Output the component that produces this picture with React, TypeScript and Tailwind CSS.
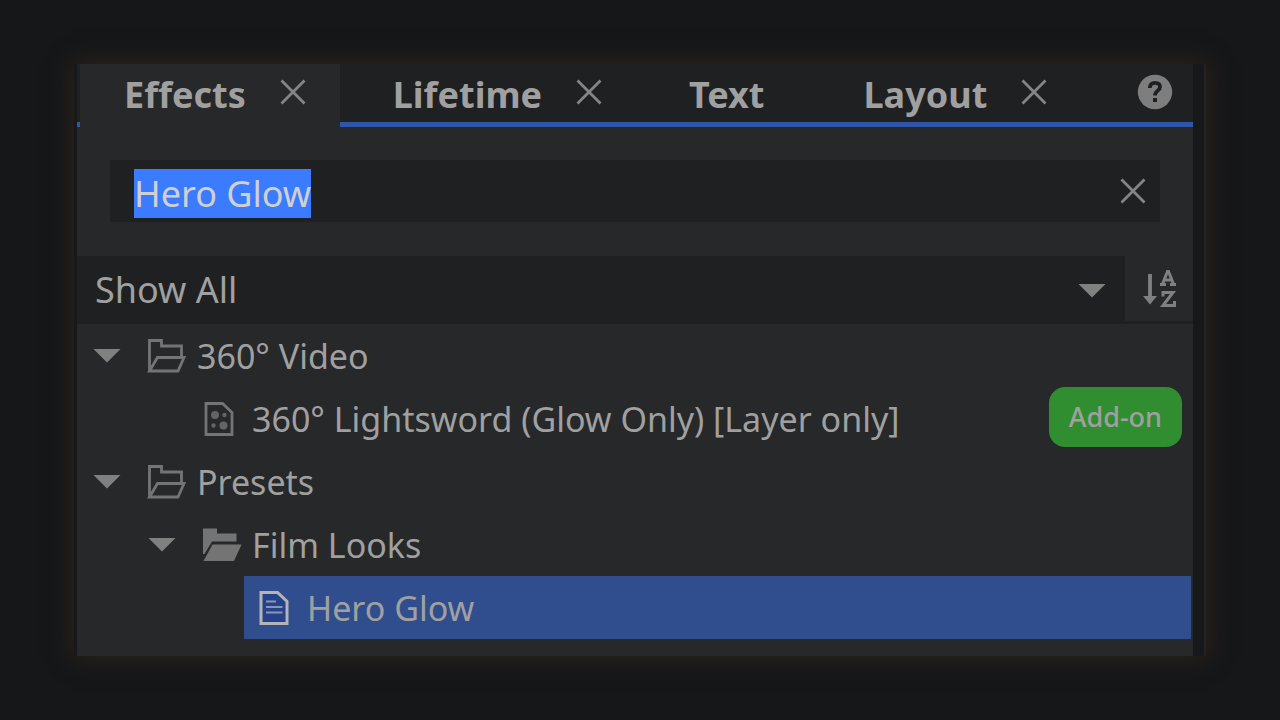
import { useEffect, useRef, type ReactNode } from "react";
import { clsx } from "clsx";

const TABS = [
  { label: "Effects", closable: true, active: true },
  { label: "Lifetime", closable: true, active: false },
  { label: "Text", closable: false, active: false },
  { label: "Layout", closable: true, active: false },
];

function CrossIcon() {
  return (
    <svg className="size-[26px]" viewBox="0 0 26 26" fill="none" stroke="currentColor" strokeWidth="2.8" aria-hidden="true">
      <path d="M1.5 1.5 24.5 24.5M24.5 1.5 1.5 24.5" />
    </svg>
  );
}

function Triangle() {
  return (
    <svg className="h-[15px] w-[28px]" viewBox="0 0 28 15" fill="currentColor" aria-hidden="true">
      <path d="M0.5 1H27.5L14 14.5Z" />
    </svg>
  );
}

function HelpIcon() {
  return (
    <svg className="size-9" viewBox="0 0 36 36" aria-hidden="true">
      <circle cx="18" cy="18" r="17.2" fill="#7e7e7e" />
      <path d="M12.8 14C13 10.4 15 8.8 18 8.8C21.2 8.8 23 10.4 23 13C23 16.8 18 16.6 18 21.6" fill="none" stroke="#1f2022" strokeWidth="3.8" />
      <rect x="16" y="24" width="4" height="4" fill="#1f2022" />
    </svg>
  );
}

function SortIcon() {
  return (
    <svg className="h-[42px] w-[36px]" viewBox="0 0 36 42" fill="none" stroke="#808080" aria-hidden="true">
      <path d="M9 6V31" strokeWidth="3.8" />
      <path d="M2 28H16L9 36.5Z" fill="#808080" stroke="none" />
      <path d="M21.5 16L26.5 3.5H27.5L32.5 16M23 12H31M19 16.500H25M29 16.500H35" strokeWidth="3" />
      <path d="M22 28.500V24.500H32L22 37.500H33.500V33" strokeWidth="3" />
    </svg>
  );
}

function FolderOutline() {
  return (
    <svg className="h-[36px] w-[40px]" viewBox="0 0 40 36" fill="none" stroke="#747474" strokeWidth="2.8" aria-hidden="true">
      <path d="M2.5 32.5V2.5H14.5V8H34.5V18.5" />
      <path d="M2.5 33L10.5 19.5H37L31 33Z" />
    </svg>
  );
}

function FolderSolid() {
  return (
    <svg className="h-[36px] w-[40px]" viewBox="0 0 40 36" fill="#747474" aria-hidden="true">
      <path d="M1 27V1.5H15V6.5H34.5V14.5H10L2.5 27Z" />
      <path d="M10.5 17.5H39.5L32 34H1.5Z" />
    </svg>
  );
}

function EffectFile() {
  return (
    <svg className="h-[36px] w-[30px]" viewBox="0 0 30 36" fill="none" stroke="#747474" strokeWidth="2.8" aria-hidden="true">
      <path d="M2 2.5H18.5L28 11.5V33.5H2Z" />
      <g fill="#646464" stroke="none">
        <circle cx="11" cy="14" r="4" />
        <circle cx="19.5" cy="24.5" r="4" />
        <circle cx="20.5" cy="14" r="2.2" />
        <circle cx="9.5" cy="24.5" r="2.2" />
      </g>
    </svg>
  );
}

function PresetFile() {
  return (
    <svg className="h-[36px] w-[30px]" viewBox="0 0 30 36" fill="#26438a" stroke="#b4b4b4" strokeWidth="3" aria-hidden="true">
      <path d="M2 2.5H18.5L28 11.5V33.5H2Z" />
      <path d="M7 11.5H17M7 17H23.5M7 22.5H23.5" stroke="#8b96b5" strokeWidth="2.2" />
    </svg>
  );
}

function Folder({ label, icon, children }: { label: string; icon: ReactNode; children: ReactNode }) {
  return (
    <li>
      <div className="flex h-[63px] items-center">
        <button type="button" aria-label={`Collapse ${label}`} className="flex w-[54px] shrink-0 text-[#808080]">
          <Triangle />
        </button>
        <span className="w-[50px] shrink-0">{icon}</span>
        <span>{label}</span>
      </div>
      <ul className="pl-[55px]">{children}</ul>
    </li>
  );
}

export default function App() {
  const searchRef = useRef<HTMLInputElement>(null);

  useEffect(() => {
    searchRef.current?.focus();
    searchRef.current?.select();
  }, []);

  return (
    <main className="flex min-h-screen flex-col bg-[#161719] px-[74px] py-16 font-['Noto_Sans',sans-serif] text-[#a0a0a0]">
      <section className="flex grow border-r-2 border-l-[3px] border-r-[#222326] border-l-[#17181a] bg-[#17181a] pr-[11px] shadow-[0_0_22px_2px_#2d241b]">
        <div className="flex min-w-0 grow flex-col bg-[#27282a]">
          <header className="flex h-[63px] bg-[linear-gradient(#1f2022_58px,#2f56a8_58px)] pl-[3px]">
            <nav className="flex grow gap-[9px]">
              {TABS.map((tab) => (
                <div
                  key={tab.label}
                  className={clsx(
                    "flex items-center gap-[34px] pb-[7px] pl-11",
                    tab.closable ? "pr-[34px]" : "pr-[46px]",
                    tab.active && "bg-[#27282a]",
                  )}
                >
                  <button type="button" className="pt-[6px] text-[36px] leading-[50px] font-bold">
                    {tab.label}
                  </button>
                  {tab.closable && (
                    <button type="button" aria-label={`Close ${tab.label}`} className="text-[#858585]">
                      <CrossIcon />
                    </button>
                  )}
                </div>
              ))}
            </nav>
            <button type="button" aria-label="Help" className="mr-5 pb-2">
              <HelpIcon />
            </button>
          </header>

          <div className="mx-[33px] mt-[33px] flex h-[62px] items-center bg-[#1f2022] pr-[14px] pl-6">
            <input
              ref={searchRef}
              type="text"
              aria-label="Search effects"
              defaultValue="Hero Glow"
              className="h-[54px] min-w-0 grow bg-transparent pt-1 text-[36px] leading-[50px] outline-none selection:bg-[#3a7bff] selection:text-[#d0d0d0]"
            />
            <button type="button" aria-label="Clear search" className="text-[#858585]">
              <CrossIcon />
            </button>
          </div>

          <div className="mt-[34px] flex h-[68px] bg-[#1f2022]">
            <div className="relative grow">
              <select aria-label="Filter effects" className="h-[68px] w-full appearance-none pl-[18px] text-[36px] outline-none">
                <option>Show All</option>
              </select>
              <span className="pointer-events-none absolute top-[27px] right-[19px] text-[#808080]">
                <Triangle />
              </span>
            </div>
            <button type="button" aria-label="Sort alphabetically" className="mb-[3px] flex w-[68px] items-center justify-center bg-[#27282a]">
              <SortIcon />
            </button>
          </div>

          <ul className="mr-[2px] pl-4 text-[34px] leading-[48px]">
            <Folder label="360° Video" icon={<FolderOutline />}>
              <li className="flex h-[63px] items-center pr-[9px] pl-14">
                <span className="w-[48px] shrink-0">
                  <EffectFile />
                </span>
                <span className="grow whitespace-nowrap">360° Lightsword (Glow Only) [Layer only]</span>
                <span className="mb-1 rounded-2xl bg-[#308e30] px-5 py-[6px] text-[27px] font-medium">Add-on</span>
              </li>
            </Folder>
            <Folder label="Presets" icon={<FolderOutline />}>
              <Folder label="Film Looks" icon={<FolderSolid />}>
                <li className="ml-[41px] flex h-[63px] items-center bg-[#304e8e] pl-[15px]">
                  <span className="w-[48px] shrink-0">
                    <PresetFile />
                  </span>
                  <span>Hero Glow</span>
                </li>
              </Folder>
            </Folder>
          </ul>
        </div>
      </section>
    </main>
  );
}
